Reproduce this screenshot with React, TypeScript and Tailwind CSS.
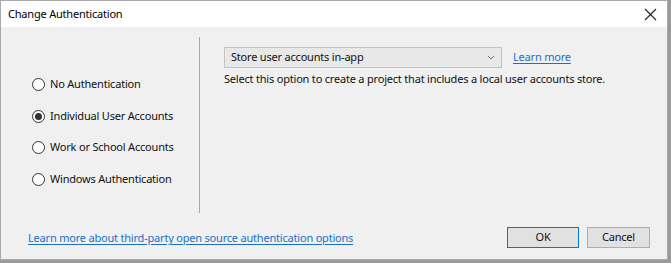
import { useState } from "react";

const options = [
  "No Authentication",
  "Individual User Accounts",
  "Work or School Accounts",
  "Windows Authentication",
];

function Radio({ checked }: { checked: boolean }) {
  return (
    <span className="flex h-[13px] w-[13px] items-center justify-center rounded-full border border-[#333] bg-white">
      {checked && <span className="h-[7px] w-[7px] rounded-full bg-[#333]" />}
    </span>
  );
}

export default function App() {
  const [selected, setSelected] = useState(1);

  return (
    <div className="h-[263px] w-[671px] bg-[#9a9a9a] font-['Noto_Sans',sans-serif] text-[11px] tracking-[-0.2px] text-[#111]">
      <div className="flex h-[260px] w-[668px] flex-col border border-[#a9a9a9] bg-[#f0f0f0]">
        <div className="flex h-[26px] shrink-0 items-center justify-between bg-white pl-[7px] pr-[10px]">
          <span className="text-black">Change Authentication</span>
          <svg width="13" height="13" viewBox="0 0 13 13" className="text-[#222]">
            <path d="M1 1L12 12M12 1L1 12" stroke="currentColor" strokeWidth="1.1" />
          </svg>
        </div>

        <div className="flex h-[186px] shrink-0 pt-[10px]">
          <div className="flex w-[198px] flex-col gap-[14.5px] pl-[31px] pt-[39px]">
            {options.map((label, i) => (
              <button
                key={label}
                onClick={() => setSelected(i)}
                className="flex h-[17px] items-center gap-[5px] text-left"
              >
                <Radio checked={selected === i} />
                <span>{label}</span>
              </button>
            ))}
          </div>

          <div className="w-px bg-[#a8a8a8]" />

          <div className="flex flex-col pl-[24px] pt-[10px]">
            <div className="flex items-center gap-[11px]">
              <div className="flex h-[21px] w-[278px] items-center justify-between border border-[#c4c4c4] bg-[#e8e8e8] pl-[6px] pr-[6px]">
                <span>Store user accounts in-app</span>
                <svg width="8" height="5" viewBox="0 0 8 5">
                  <path d="M1 1L4 4L7 1" stroke="#707070" fill="none" strokeWidth="1" />
                </svg>
              </div>
              <a className="text-[#1a6fc9] underline underline-offset-2">Learn more</a>
            </div>
            <p className="mt-[3px]">Select this option to create a project that includes a local user accounts store.</p>
          </div>
        </div>

        <div className="flex flex-1 items-start justify-between pl-[27px] pr-[17px] pt-[14px]">
          <a className="mt-[3px] text-[#1a6fc9] underline underline-offset-2">
            Learn more about third-party open source authentication options
          </a>
          <div className="flex gap-[8px]">
            <button className="h-[21px] w-[72px] border border-[#0078d7] bg-[#e1e1e1]">OK</button>
            <button className="h-[21px] w-[63px] border border-[#adadad] bg-[#e1e1e1]">Cancel</button>
          </div>
        </div>
      </div>
    </div>
  );
}
